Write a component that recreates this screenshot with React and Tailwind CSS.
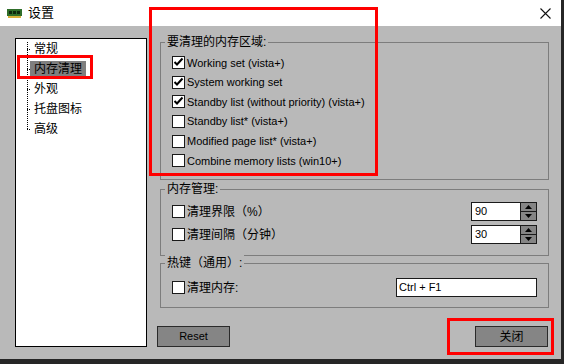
import React from 'react';

const font = { fontFamily: '"Liberation Sans", "Noto Sans CJK SC", sans-serif' };

function CheckBox({ checked }) {
  return (
    <span className="w-[13px] h-[13px] shrink-0 bg-white border border-[#1a1a1a] flex items-center justify-center">
      {checked && (
        <svg width="11" height="11" viewBox="0 0 11 11">
          <polyline points="1.5,5 4,7.5 9.5,1.5" fill="none" stroke="#000" strokeWidth="2" />
        </svg>
      )}
    </span>
  );
}

function Group({ title, className, children }) {
  return (
    <div className={`border border-[#7d7d7d] flex flex-col ${className}`}>
      <span className="-mt-[9px] ml-[4px] self-start px-[2px] bg-[#b9b9b9] text-[12px] leading-[16px] text-black">
        {title}
      </span>
      {children}
    </div>
  );
}

function Spin({ value }) {
  return (
    <div className="flex w-[66px] h-[19px] border border-[#1a1a1a] bg-white">
      <span className="flex-1 pl-[3px] text-[11px] leading-[17px] text-black">{value}</span>
      <div className="w-[16px] flex flex-col border-l border-[#1a1a1a] bg-[#858585]">
        <div className="flex-1 flex items-center justify-center border-b border-[#1a1a1a]">
          <svg width="7" height="4" viewBox="0 0 7 4"><polygon points="3.5,0 7,4 0,4" fill="#000" /></svg>
        </div>
        <div className="flex-1 flex items-center justify-center">
          <svg width="7" height="4" viewBox="0 0 7 4"><polygon points="0,0 7,0 3.5,4" fill="#000" /></svg>
        </div>
      </div>
    </div>
  );
}

const areas = [
  ['Working set (vista+)', true],
  ['System working set', true],
  ['Standby list (without priority) (vista+)', true],
  ['Standby list* (vista+)', false],
  ['Modified page list* (vista+)', false],
  ['Combine memory lists (win10+)', false],
];

const treeItems = ['常规', '内存清理', '外观', '托盘图标', '高级'];

export default function App() {
  return (
    <div className="relative w-[564px] h-[364px] bg-[#262626] overflow-hidden" style={font}>
      <div className="w-[561px] h-[359px] flex flex-col">
        {/* title bar */}
        <div className="h-[26px] bg-white flex items-center shrink-0">
          <svg className="ml-[7px]" width="15" height="9" viewBox="0 0 15 9">
            <rect x="0" y="0" width="15" height="7" fill="#2f6e2a" />
            <rect x="2" y="2" width="3" height="3" fill="#0d2a0d" />
            <rect x="6" y="2" width="3" height="3" fill="#0d2a0d" />
            <rect x="10" y="2" width="3" height="3" fill="#0d2a0d" />
            <rect x="1" y="7" width="13" height="2" fill="#d8b23a" />
          </svg>
          <span className="ml-[6px] text-[13px] text-black">设置</span>
          <svg className="ml-auto mr-[10px]" width="11" height="11" viewBox="0 0 11 11">
            <path d="M0.5 0.5 L10.5 10.5 M10.5 0.5 L0.5 10.5" stroke="#111" strokeWidth="1.1" />
          </svg>
        </div>

        {/* body */}
        <div className="flex-1 bg-[#b9b9b9] flex pl-[15px] pt-[12px]">
          {/* tree */}
          <div className="w-[132px] h-[309px] bg-white border border-black flex pt-[0px]">
            <svg width="14" height="100" viewBox="0 0 14 100" className="shrink-0">
              <line x1="11.5" y1="3" x2="11.5" y2="91" stroke="#000" strokeDasharray="1 1" />
              {[10, 30, 50, 70, 90].map((y) => (
                <line key={y} x1="11" y1={y + 0.5} x2="16" y2={y + 0.5} stroke="#000" strokeDasharray="1 1" />
              ))}
            </svg>
            <div className="flex flex-col">
              {treeItems.map((t) => (
                <div key={t} className="h-[20px] flex items-center">
                  <span
                    className={`h-[17px] px-[4px] flex items-center text-[12px] text-black ${
                      t === '内存清理' ? 'bg-[#7f7f7f]' : ''
                    }`}
                  >
                    {t}
                  </span>
                </div>
              ))}
            </div>
          </div>

          {/* right side */}
          <div className="ml-[13px] w-[389px] pt-[4px] flex flex-col">
            <Group title="要清理的内存区域:" className="h-[138px]">
              <div className="mt-[3px] pl-[11px] flex flex-col">
                {areas.map(([label, on]) => (
                  <div key={label} className="h-[19.6px] flex items-center">
                    <CheckBox checked={on} />
                    <span className="ml-[2px] text-[11px] text-black whitespace-nowrap">{label}</span>
                  </div>
                ))}
              </div>
            </Group>

            <Group title="内存管理:" className="mt-[9px] h-[67px]">
              <div className="mt-[5px] pl-[11px] pr-[11px] flex flex-col gap-[4px]">
                {[
                  ['清理界限（%）', '90'],
                  ['清理间隔（分钟）', '30'],
                ].map(([label, v]) => (
                  <div key={label} className="h-[19px] flex items-center">
                    <CheckBox />
                    <span className="ml-[2px] text-[12px] text-black">{label}</span>
                    <div className="ml-auto">
                      <Spin value={v} />
                    </div>
                  </div>
                ))}
              </div>
            </Group>

            <Group title="热键（通用）:" className="mt-[7px] h-[45px]">
              <div className="mt-[7px] pl-[11px] pr-[11px] h-[19px] flex items-center">
                <CheckBox />
                <span className="ml-[2px] text-[12px] text-black">清理内存:</span>
                <div className="ml-auto w-[141px] h-[19px] bg-white border border-[#1a1a1a] pl-[2px] text-[11px] leading-[17px] text-black">
                  Ctrl + F1
                </div>
              </div>
            </Group>

            <div className="mt-[18px] -ml-[3px] w-[391px] flex justify-between">
              <button className="w-[73px] h-[21px] bg-[#858585] border border-[#2a2a2a] text-[11px] text-black">
                Reset
              </button>
              <button className="w-[73px] h-[21px] bg-[#858585] border border-[#2a2a2a] text-[12px] text-black">
                关闭
              </button>
            </div>
          </div>
        </div>
      </div>

      {/* red annotation frames */}
      <div className="absolute left-[17px] top-[55px] w-[76px] h-[24px] border-[3px] border-[#ff0000]" />
      <div className="absolute left-[149px] top-[7px] w-[229px] h-[169px] border-[3px] border-[#ff0000]" />
      <div className="absolute left-[447px] top-[318px] w-[107px] h-[37px] border-[3px] border-[#ff0000]" />
    </div>
  );
}
